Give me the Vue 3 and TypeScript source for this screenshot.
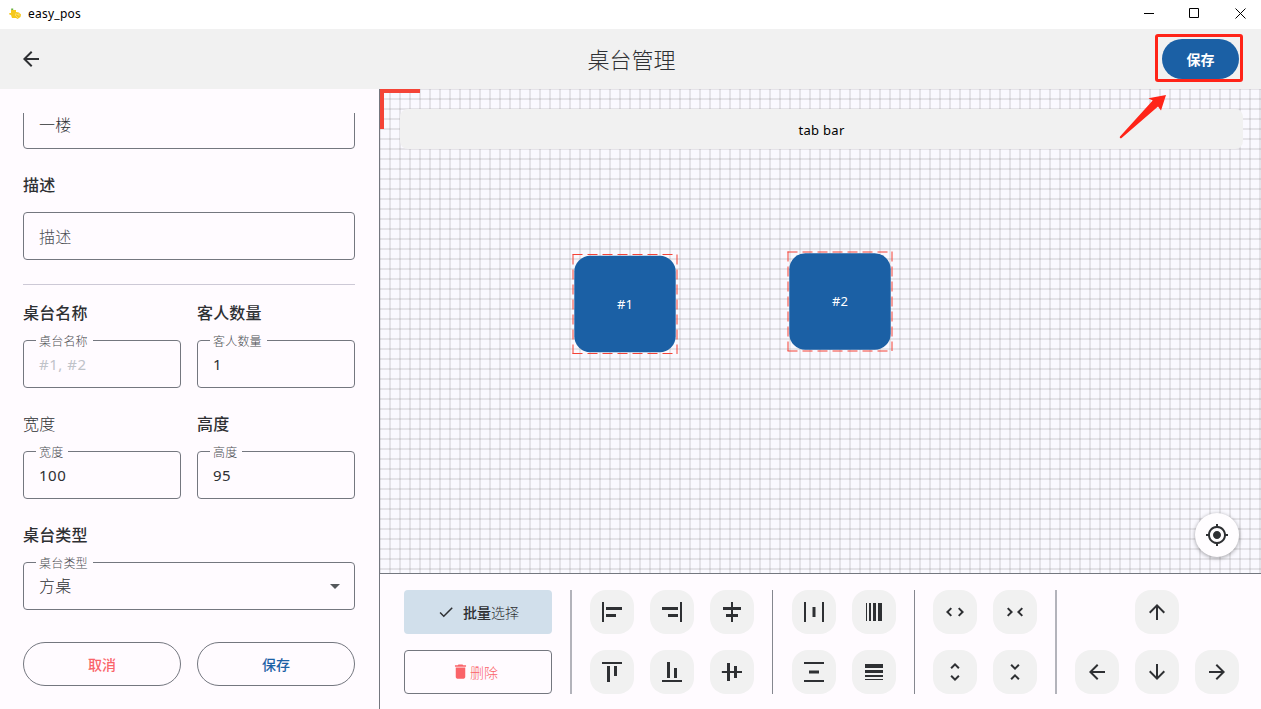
<script setup lang="ts">
interface Tool {
  name: string
  path: string
  turn?: boolean
}

interface TableItem {
  label: string
  x: number
  y: number
  edge: number
}

const arrow = {
  left: 'M20 11H7.83l5.59-5.59L12 4l-8 8 8 8 1.41-1.41L7.83 13H20v-2z',
  right: 'M12 4l-1.41 1.41L16.17 11H4v2h12.17l-5.58 5.59L12 20l8-8z',
  up: 'M4 12l1.41 1.41L11 7.83V20h2V7.83l5.58 5.59L20 12l-8-8-8 8z',
  down: 'M20 12l-1.41-1.41L13 16.17V4h-2v12.17l-5.58-5.59L4 12l8 8 8-8z',
}

const weight = 'M3 17h18v-2H3v2zm0 3h18v-1H3v1zm0-7h18v-3H3v3zm0-9v4h18V4H3z'
const expand =
  'M12 5.83L15.17 9l1.41-1.41L12 3 7.41 7.59 8.83 9 12 5.83zm0 12.34L8.83 15l-1.41 1.41L12 21l4.59-4.59L15.17 15 12 18.17z'
const collapse =
  'M7.41 18.59L8.83 20 12 16.83 15.17 20l1.41-1.41L12 14l-4.59 4.59zm9.18-13.18L15.17 4 12 7.17 8.83 4 7.41 5.41 12 10l4.59-4.59z'

const groups: { cols: string; wide: boolean; tools: Tool[] }[] = [
  {
    cols: 'three',
    wide: true,
    tools: [
      { name: 'align-left', path: 'M4 22H2V2h2v20zM22 7H6v3h16V7zM16 14H6v3h10v-3z' },
      { name: 'align-right', path: 'M20 2h2v20h-2V2zM2 10h16V7H2v3zM8 17h10v-3H8v3z' },
      { name: 'align-center', path: 'M11 2h2v5h8v3h-8v4h5v3h-5v5h-2v-5H6v-3h5v-4H3V7h8V2z' },
      { name: 'align-top', path: 'M22 2v2H2V2h20zM7 22h3V6H7v16zM14 16h3V6h-3v10z' },
      { name: 'align-bottom', path: 'M22 22H2v-2h20v2zM10 2H7v16h3V2zM17 8h-3v10h3V8z' },
      { name: 'align-middle', path: 'M22 11h-5V6h-3v5h-4V3H7v8H1.84v2H7v8h3v-8h4v5h3v-5h5v-2z' },
    ],
  },
  {
    cols: 'two',
    wide: false,
    tools: [
      { name: 'distribute-h', path: 'M4 22H2V2h2v20zM22 2h-2v20h2V2zM13.5 7h-3v10h3V7z' },
      { name: 'weight-h', path: weight, turn: true },
      { name: 'distribute-v', path: 'M22 2v2H2V2h20zM7 10.5v3h10v-3H7zM2 20v2h20v-2H2z' },
      { name: 'weight-v', path: weight },
    ],
  },
  {
    cols: 'two',
    wide: false,
    tools: [
      { name: 'expand-h', path: expand, turn: true },
      { name: 'collapse-h', path: collapse, turn: true },
      { name: 'expand-v', path: expand },
      { name: 'collapse-v', path: collapse },
    ],
  },
  {
    cols: 'three',
    wide: true,
    tools: [
      { name: 'move-up', path: arrow.up },
      { name: 'move-left', path: arrow.left },
      { name: 'move-down', path: arrow.down },
      { name: 'move-right', path: arrow.right },
    ],
  },
]

const tables: TableItem[] = [
  { label: '#1', x: 192, y: 165, edge: 0.5 },
  { label: '#2', x: 407, y: 162, edge: 1 },
]
</script>

<template>
  <div class="window">
    <div class="titlebar">
      <svg class="logo" width="13" height="12" viewBox="0 0 13 12">
        <path d="M2 2h5v2l3 .5 2 2-.5 2.500-3 2-1.500-1H3L2 7 .3 6.500V5L2 5z" fill="#f6c81c" />
        <path d="M2.200 .5h2V2h-2z" fill="#6cb33f" />
        <path d="M7 5.500l1 1M9 6.500l1 1M7.500 8.500l1 1M10 5.500v1M6 7h1" stroke="#fff6cf" stroke-width=".8" />
      </svg>
      <span class="app-name">easy_pos</span>
      <svg class="controls" width="104" height="12" viewBox="0 0 104 12" fill="none" stroke="#000">
        <path d="M1 5.500h10M46.500 .5h9v9h-9zM92.500 .5l10 10M102.500 .5l-10 10" />
      </svg>
    </div>

    <header class="header">
      <svg class="back" width="24" height="24" viewBox="0 0 24 24"><path :d="arrow.left" /></svg>
      <h1>桌台管理</h1>
      <button class="save">保存</button>
    </header>

    <div class="body">
      <aside class="sidebar">
        <div class="viewport">
          <div class="form">
            <div class="field"><span class="value light raised">一楼</span></div>
            <div class="caption">描述</div>
            <div class="field"><span class="value hint">描述</span></div>
            <div class="rule"></div>
            <div class="pair first">
              <div>
                <div class="caption">桌台名称</div>
                <div class="field">
                  <span class="legend">桌台名称</span><span class="value ghost">#1, #2</span>
                </div>
              </div>
              <div>
                <div class="caption">客人数量</div>
                <div class="field"><span class="legend">客人数量</span><span class="value">1</span></div>
              </div>
            </div>
            <div class="pair">
              <div>
                <div class="caption thin">宽度</div>
                <div class="field"><span class="legend">宽度</span><span class="value">100</span></div>
              </div>
              <div>
                <div class="caption">高度</div>
                <div class="field"><span class="legend">高度</span><span class="value">95</span></div>
              </div>
            </div>
            <div class="caption">桌台类型</div>
            <div class="field">
              <span class="legend">桌台类型</span><span class="value light raised">方桌</span>
              <svg class="caret" width="10" height="5" viewBox="0 0 10 5"><path d="M0 0h10L5 5z" /></svg>
            </div>
            <div class="pair actions">
              <button class="pill cancel">取消</button>
              <button class="pill confirm">保存</button>
            </div>
          </div>
        </div>
      </aside>

      <main class="main">
        <section class="canvas">
          <div class="corner"></div>
          <div class="tabbar">tab bar</div>
          <div
            v-for="t in tables"
            :key="t.label"
            class="table"
            :style="{ left: t.x + 'px', top: t.y + 'px' }"
          >
            <svg width="106" height="101" viewBox="0 0 106 101">
              <g fill="none" stroke="#f44336" stroke-dasharray="10 5">
                <path :d="`M.5 ${t.edge}H105`" />
                <path :d="`M.5 ${t.edge + 99}H105`" />
                <path d="M1 .5V100M105 .5V100" />
              </g>
              <rect x="2.300" :y="t.edge + 1.200" width="101.400" height="96.500" rx="16" fill="#1b60a5" />
            </svg>
            <span>{{ t.label }}</span>
          </div>
          <button class="locate">
            <svg width="24" height="24" viewBox="0 0 24 24">
              <path
                d="M12 8c-2.210 0-4 1.790-4 4s1.790 4 4 4 4-1.790 4-4-1.790-4-4-4zm8.940 3c-.46-4.170-3.770-7.480-7.940-7.940V1h-2v2.060C6.830 3.520 3.520 6.830 3.060 11H1v2h2.060c.46 4.170 3.770 7.480 7.940 7.940V23h2v-2.060c4.170-.46 7.480-3.770 7.940-7.940H23v-2h-2.060zM12 19c-3.870 0-7-3.130-7-7s3.130-7 7-7 7 3.130 7 7-3.130 7-7 7z"
              />
            </svg>
          </button>
        </section>

        <section class="panel">
          <div class="bulk">
            <button class="select">
              <svg width="18" height="18" viewBox="0 0 24 24">
                <path d="M9 16.170L4.830 12l-1.420 1.410L9 19 21 7l-1.410-1.410z" />
              </svg>
              <span><b>批量</b>选择</span>
            </button>
            <button class="delete">
              <svg width="19" height="19" viewBox="0 0 24 24">
                <path d="M6 19c0 1.100.9 2 2 2h8c1.100 0 2-.9 2-2V7H6v12zM19 4h-3.500l-1-1h-5l-1 1H5v2h14V4z" />
              </svg>
              <span>删除</span>
            </button>
          </div>
          <template v-for="(g, i) in groups" :key="i">
            <div class="divider" :class="{ wide: g.wide }"></div>
            <div class="tools" :class="g.cols">
              <button v-for="t in g.tools" :key="t.name" class="tool" :class="t.name">
                <svg width="24" height="24" viewBox="0 0 24 24" :class="{ turn: t.turn }">
                  <path :d="t.path" />
                </svg>
              </button>
            </div>
          </template>
        </section>
      </main>
    </div>

    <div class="callout"></div>
    <svg class="pointer" width="50" height="48" viewBox="0 0 50 48">
      <path d="M47 2L29.500 5.300l4.200 2.200L1 43.500c-.7 1 .3 2.300 1.300 1.700L39 13.500l3 4z" fill="#ff2418" />
    </svg>
  </div>
</template>

<style>
body {
  margin: 0;
  background: #fffbff;
}
</style>

<style scoped>
.window {
  position: relative;
  display: flex;
  flex-direction: column;
  width: 1261px;
  height: 709px;
  overflow: hidden;
  background: #fffbff;
  color: #2e3033;
  font-family: 'Noto Sans', 'Noto Sans CJK SC', sans-serif;
}
button {
  display: flex;
  align-items: center;
  justify-content: center;
  box-sizing: border-box;
  margin: 0;
  padding: 0;
  border: 0;
  background: none;
  color: inherit;
  font: inherit;
}
svg {
  display: block;
  flex: none;
}
.titlebar {
  display: flex;
  align-items: center;
  flex: none;
  height: 29px;
  box-sizing: border-box;
  padding: 0 14px 1px 9px;
  background: #fff;
}
.app-name {
  margin-left: 6px;
  color: #000;
  font-size: 12px;
  line-height: 16px;
  letter-spacing: 0.25px;
}
.controls {
  margin-left: auto;
}
.header {
  display: grid;
  grid-template-columns: 1fr auto 1fr;
  align-items: center;
  flex: none;
  height: 60px;
  box-sizing: border-box;
  padding: 0 22px 0 19px;
  background: #f1f1f1;
}
.back {
  fill: #2e3033;
}
h1 {
  margin: 0 0 0 5px;
  font-size: 22px;
  font-weight: 300;
  line-height: 30px;
}
.save {
  justify-self: end;
  width: 77px;
  height: 40px;
  padding-bottom: 1px;
  border-radius: 20px;
  background: #1b60a5;
  color: #fff;
  font-size: 14px;
  font-weight: 700;
}
.body {
  display: flex;
  flex: 1;
  min-height: 0;
}
.sidebar {
  width: 380px;
  box-sizing: border-box;
  padding: 24px 24px 0 23px;
  border-right: 1px solid #74777f;
}
.viewport {
  height: 596px;
  overflow: hidden;
}
.form {
  margin-top: -12px;
}
.field {
  position: relative;
  display: flex;
  align-items: center;
  height: 48px;
  box-sizing: border-box;
  padding: 0 14px 0 15px;
  border: 1px solid #74777f;
  border-radius: 4px;
}
.value {
  font-size: 15px;
  letter-spacing: 0.5px;
}
.light,
.hint {
  font-size: 16px;
  letter-spacing: 0.2px;
  font-weight: 300;
}
.raised {
  padding-bottom: 2px;
}
.hint {
  color: #4c4f54;
}
.ghost {
  color: #bfc3c9;
}
.legend {
  position: absolute;
  top: -8px;
  left: 12px;
  padding: 0 5px 0 3px;
  background: #fffbff;
  color: #4c4f54;
  font-size: 12px;
  font-weight: 300;
  line-height: 18px;
  letter-spacing: 0.2px;
}
.caret {
  margin-left: auto;
  fill: #55585c;
}
.caption {
  padding: 24px 0 15px;
  font-size: 16px;
  font-weight: 500;
  line-height: 24px;
  letter-spacing: 0.15px;
}
.caption.thin {
  font-weight: 300;
}
.rule {
  height: 1px;
  margin-top: 24px;
  background: #cdc9d6;
}
.pair {
  display: grid;
  grid-template-columns: 1fr 1fr;
  gap: 16px;
}
.first .caption {
  padding-top: 16px;
}
.actions {
  margin-top: 32px;
}
.pill {
  height: 44px;
  padding-bottom: 1px;
  border: 1px solid #74777f;
  border-radius: 22px;
  font-size: 14px;
  font-weight: 500;
}
.cancel {
  color: #fa6469;
}
.confirm {
  color: #1b60a5;
}
.main {
  display: flex;
  flex-direction: column;
  flex: 1;
}
.canvas {
  position: relative;
  height: 485px;
  box-sizing: border-box;
  padding: 20px 18px 0 20px;
  border-bottom: 1px solid #74777f;
  background-color: #faf9ff;
  background-image:
    linear-gradient(90deg, rgba(128, 126, 128, 0.18) 1px, transparent 1px, transparent 9px, rgba(128, 126, 128, 0.18) 9px),
    linear-gradient(rgba(128, 126, 128, 0.18) 1px, transparent 1px, transparent 9px, rgba(128, 126, 128, 0.18) 9px);
  background-size: 10px 10px;
}
.corner {
  position: absolute;
  top: 0;
  left: 0;
  width: 36px;
  height: 36px;
  border-top: 4px solid #f44336;
  border-left: 4px solid #f44336;
}
.tabbar {
  display: flex;
  align-items: center;
  justify-content: center;
  height: 40px;
  padding-top: 1px;
  box-sizing: border-box;
  border-radius: 8px;
  background: #f1f1f1;
  color: #000;
  font-size: 13px;
  letter-spacing: 0.3px;
}
.table {
  position: absolute;
  display: grid;
  place-items: center;
  color: #fff;
  font-size: 13px;
}
.table > * {
  grid-area: 1 / 1;
}
.table span {
  padding-bottom: 1px;
}
.locate {
  position: absolute;
  right: 22px;
  bottom: 16px;
  width: 44px;
  height: 44px;
  border-radius: 50%;
  background: #fffdff;
  box-shadow: 0 1px 4px rgba(0, 0, 0, 0.38);
  fill: #2e3033;
}
.panel {
  display: flex;
  padding: 16px 22px 0 24px;
}
.bulk {
  display: flex;
  flex-direction: column;
  gap: 16px;
  width: 148px;
}
.select,
.delete {
  height: 44px;
  border-radius: 4px;
  font-size: 14px;
  font-weight: 300;
}
.select {
  gap: 8px;
  background: #d1dfeb;
  fill: #2e3033;
}
.select b {
  font-weight: 500;
}
.delete {
  padding-right: 7px;
  padding-bottom: 1px;
  border: 1px solid #74777f;
  color: #fa6469;
  fill: #fa6469;
}
.divider {
  display: flex;
  justify-content: center;
  width: 37.5px;
  height: 104px;
}
.divider::before {
  content: '';
  width: 1px;
  background: #85878f;
}
.divider.wide {
  width: 38px;
}
.divider.wide::before {
  width: 2px;
  background: #b3b3bb;
}
.tools {
  display: grid;
  grid-template-columns: 44px 44px;
  gap: 16px;
}
.tools.three {
  grid-template-columns: 44px 44px 44px;
}
.tool {
  width: 44px;
  height: 44px;
  border-radius: 16px;
  background: #f1f1f1;
  fill: #2e3033;
}
.move-up {
  grid-column: 2;
}
.move-left {
  grid-column: 1;
}
.turn {
  transform: rotate(90deg);
}
.callout {
  position: absolute;
  top: 34px;
  left: 1155px;
  width: 88px;
  height: 48px;
  box-sizing: border-box;
  border: 3px solid #ff2418;
  border-radius: 3px;
}
.pointer {
  position: absolute;
  top: 93px;
  left: 1119px;
}
</style>
